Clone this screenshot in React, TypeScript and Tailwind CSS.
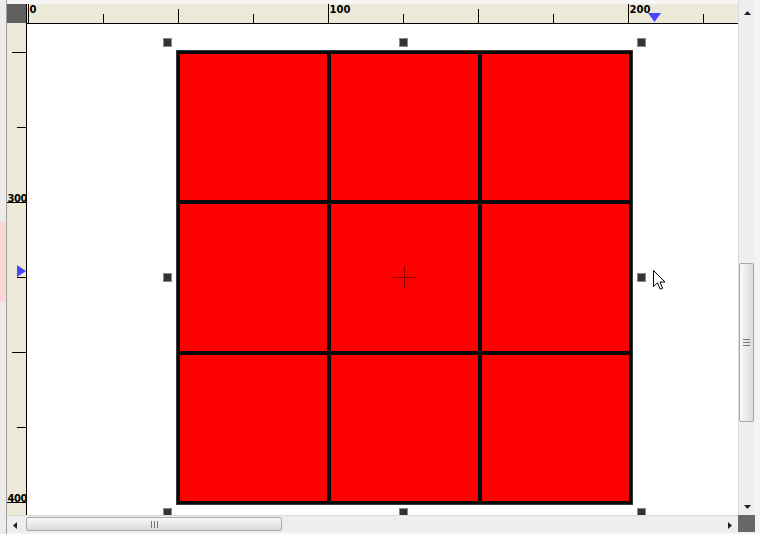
import React from "react";

const topTicks = Array.from({ length: 10 }, (_, i) => i * 25);
const leftTicks = Array.from({ length: 7 }, (_, i) => 250 + i * 25);
const rulerFont = '"DejaVu Sans", "Liberation Sans", Arial, sans-serif';

function TopRuler() {
  return (
    <svg width={711} height={20} className="block" style={{ fontFamily: rulerFont }}>
      {topTicks.map((v) => {
        const x = 1 + 3 * v + 0.5;
        const y1 = v % 100 === 0 ? 0 : v % 50 === 0 ? 5 : 10;
        return (
          <g key={v}>
            <line x1={x} x2={x} y1={y1} y2={20} stroke="#000" strokeWidth={1} />
            {v % 100 === 0 && (
              <text x={x + 1} y={8.5} fontSize={10} fill="#000" fontWeight={600}>
                {v}
              </text>
            )}
          </g>
        );
      })}
      <line x1={0} x2={711} y1={19.5} y2={19.5} stroke="#000" />
      <polygon points="621,9 634,9 627.5,18" fill="#4646ff" />
    </svg>
  );
}

function LeftRuler() {
  return (
    <svg width={20} height={491} className="block" style={{ fontFamily: rulerFont }}>
      {leftTicks.map((v) => {
        const y = 178 + 3 * (v - 300) + 0.5;
        const x1 = v % 100 === 0 ? 0 : v % 50 === 0 ? 5 : 10;
        return (
          <g key={v}>
            <line x1={x1} x2={20} y1={y} y2={y} stroke="#000" />
            {v % 100 === 0 && (
              <text x={0.5} y={y - 0.5} fontSize={10} fill="#000" fontWeight={600} letterSpacing={-0.5}>
                {v}
              </text>
            )}
          </g>
        );
      })}
      <line x1={19.5} x2={19.5} y1={0} y2={491} stroke="#000" />
      <polygon points="10,241 19,247 10,253" fill="#4646ff" />
    </svg>
  );
}

function Handle({ x, y }: { x: number; y: number }) {
  return (
    <div
      className="absolute w-[9px] h-[9px] bg-[#333333] border border-[#8a8a8a]"
      style={{ left: x, top: y }}
    />
  );
}

function Canvas() {
  const hx = [136, 372, 610];
  const hy = [14, 249, 484];
  return (
    <div className="relative w-[711px] h-[491px] bg-white overflow-hidden">
      <div className="absolute left-[149px] top-[26px] w-[457px] h-[455px] border border-[#3a3a3a] bg-[#0a0a0a] p-[3px] grid grid-cols-3 grid-rows-3 gap-[4px]">
        {Array.from({ length: 9 }).map((_, i) => (
          <div key={i} className="bg-[#ff0000]" />
        ))}
      </div>
      {/* center cross */}
      <div className="absolute left-[366px] top-[253px] w-[22px] h-[1px] bg-[#8a0000]" />
      <div className="absolute left-[377px] top-[242px] w-[1px] h-[22px] bg-[#8a0000]" />
      {hy.map((y, yi) =>
        hx.map((x, xi) =>
          yi === 1 && xi === 1 ? null : <Handle key={`${xi}-${yi}`} x={x} y={y} />
        )
      )}
      {/* mouse cursor */}
      <svg className="absolute left-[626px] top-[246px]" width={13} height={21} viewBox="0 0 13 21">
        <path
          d="M0.5 0.5 L0.5 16.5 L4.5 12.8 L7.2 19.2 L9.6 18.2 L7 12 L12 12 Z"
          fill="#fff"
          stroke="#000"
          strokeWidth={1}
          strokeLinejoin="miter"
        />
      </svg>
    </div>
  );
}

function VScrollbar() {
  return (
    <div className="relative w-[17px] h-[515px] bg-[#eeeeee] border-l border-[#dcdcdc]">
      <svg className="absolute left-[5px] top-[11px]" width={7} height={4}>
        <polygon points="0,4 7,4 3.5,0" fill="#222" />
      </svg>
      <div className="absolute left-[0px] top-[263px] w-[15px] h-[159px] rounded-[2px] border border-[#a8a8a8] bg-gradient-to-r from-[#fafafa] to-[#dadada] flex items-center justify-center">
        <div className="flex flex-col gap-[2px]">
          <div className="w-[7px] h-[1px] bg-[#777]" />
          <div className="w-[7px] h-[1px] bg-[#777]" />
          <div className="w-[7px] h-[1px] bg-[#777]" />
        </div>
      </div>
      <svg className="absolute left-[5px] top-[505px]" width={7} height={4}>
        <polygon points="0,0 7,0 3.5,4" fill="#222" />
      </svg>
    </div>
  );
}

function HScrollbar() {
  return (
    <div className="relative w-[731px] h-[17px] bg-[#eeeeee] border-t border-[#dcdcdc]">
      <svg className="absolute left-[6px] top-[6px]" width={4} height={7}>
        <polygon points="4,0 4,7 0,3.5" fill="#222" />
      </svg>
      <div className="absolute left-[19px] top-[1px] w-[256px] h-[14px] rounded-[2px] border border-[#a8a8a8] bg-gradient-to-b from-[#fafafa] to-[#dadada] flex items-center justify-center">
        <div className="flex flex-row gap-[2px]">
          <div className="w-[1px] h-[7px] bg-[#777]" />
          <div className="w-[1px] h-[7px] bg-[#777]" />
          <div className="w-[1px] h-[7px] bg-[#777]" />
        </div>
      </div>
      <svg className="absolute left-[721px] top-[6px]" width={4} height={7}>
        <polygon points="0,0 0,7 4,3.5" fill="#222" />
      </svg>
    </div>
  );
}

export default function App() {
  return (
    <div className="w-[760px] h-[534px] bg-[#f2f2f2] flex flex-row overflow-hidden">
      {/* left window strip */}
      <div className="w-[7px] h-[534px] bg-[#ececec] border-r border-[#a0a0a0] flex flex-col">
        <div className="h-[222px]" />
        <div className="h-[80px] bg-[#ffd6d6]" />
      </div>
      {/* middle */}
      <div className="w-[731px] flex flex-col">
        <div className="h-[4px] bg-[#f6f6f6]" />
        <div className="flex flex-row h-[20px] bg-[#ece9d8]">
          <div className="w-[19px] h-[19px] bg-[#606060]" />
          <div className="w-[1px] h-[20px] bg-black" />
          <TopRuler />
        </div>
        <div className="flex flex-row">
          <div className="w-[20px] bg-[#ece9d8]">
            <LeftRuler />
          </div>
          <Canvas />
        </div>
        <HScrollbar />
        <div className="h-[2px]" />
      </div>
      {/* right */}
      <div className="w-[17px] flex flex-col">
        <VScrollbar />
        <div className="w-[17px] h-[17px] bg-[#686868]" />
      </div>
      <div className="w-[5px] bg-[#f4f4f4]" />
    </div>
  );
}
